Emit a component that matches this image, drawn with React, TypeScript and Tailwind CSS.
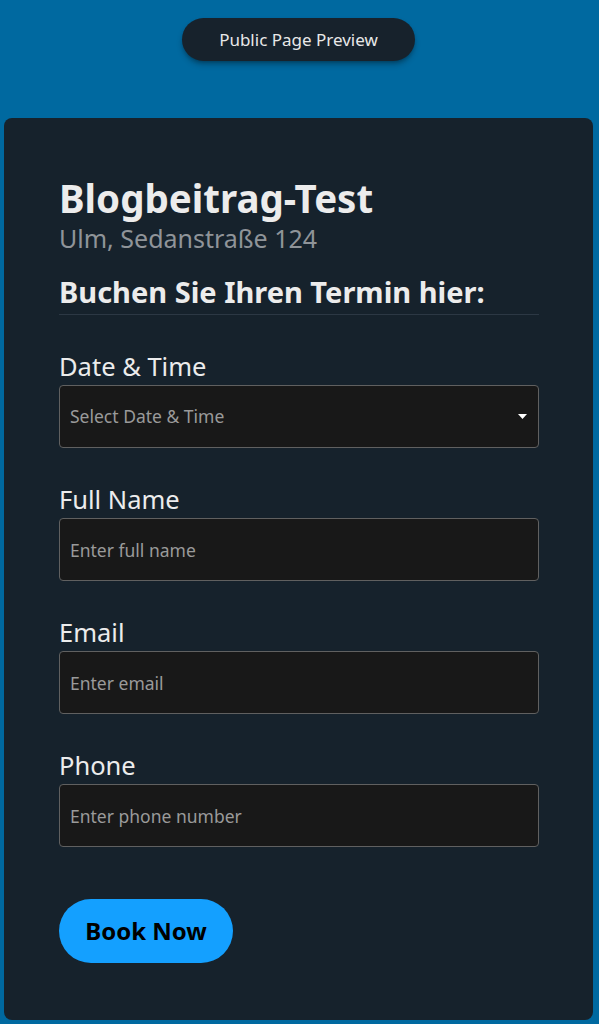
const fields = [
  { label: 'Full Name', placeholder: 'Enter full name', type: 'text' },
  { label: 'Email', placeholder: 'Enter email', type: 'email' },
  { label: 'Phone', placeholder: 'Enter phone number', type: 'tel' },
];

const App: React.FC = () => {
  return (
    <div
      className="min-h-[1024px] bg-[#0069a0] pl-1 pr-[6px] pt-[18px] pb-1 flex flex-col items-center"
      style={{ fontFamily: '"Noto Sans", "Open Sans", sans-serif' }}
    >
      <button className="h-[43px] w-[233px] rounded-full bg-[#17222c] text-[17px] text-[#e8e8e8] shadow-md shadow-black/30">
        Public Page Preview
      </button>

      <div className="mt-[57px] w-full h-[902px] rounded-lg bg-[#16222c] pl-[55px] pr-[54px] pt-[58px]">
        <h1 className="text-[38.5px] leading-[44px] font-bold text-[#ececec]">Blogbeitrag-Test</h1>
        <p className="text-[25px] leading-[36px] text-[#8f9499]">Ulm, Sedanstraße 124</p>
        <h2 className="mt-[17px] pb-[3px] border-b border-[#2c3844] text-[29px] leading-[38px] font-bold text-[#ececec]">
          Buchen Sie Ihren Termin hier:
        </h2>

        <form className="mt-[33px] flex flex-col gap-[33px]">
          <div>
            <label className="block text-[25.5px] leading-[36px] text-[#ececec]">Date &amp; Time</label>
            <div className="mt-[1px] relative h-[63px] rounded-[4px] border border-[#606060] bg-[#181818] flex items-center px-[10px]">
              <span className="text-[17.5px] text-[#9a9a9a]">Select Date &amp; Time</span>
              <svg className="absolute right-[11px] top-[28px]" width="9" height="5" viewBox="0 0 9 5">
                <path d="M0 0h9L4.5 5z" fill="#ffffff" />
              </svg>
            </div>
          </div>

          {fields.map((f) => (
            <div key={f.label}>
              <label className="block text-[25.5px] leading-[36px] text-[#ececec]">{f.label}</label>
              <input
                type={f.type}
                placeholder={f.placeholder}
                className="mt-[1px] block w-full h-[63px] rounded-[4px] border border-[#606060] bg-[#181818] px-[10px] text-[17.5px] text-white placeholder:text-[#9a9a9a] outline-none"
              />
            </div>
          ))}

          <button
            type="button"
            className="mt-[19px] self-start h-[64px] w-[174px] rounded-full bg-[#14a0ff] text-[24px] font-bold text-black"
          >
            Book Now
          </button>
        </form>
      </div>
    </div>
  );
};

export default App;
